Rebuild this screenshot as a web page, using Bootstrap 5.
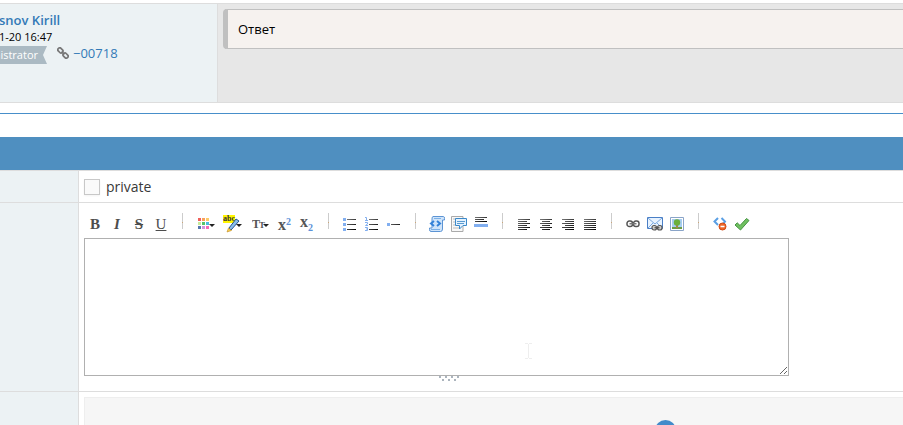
<!DOCTYPE html>
<html lang="en">
<head>
<meta charset="utf-8">
<meta name="viewport" content="width=device-width, initial-scale=1">
<title>Add note</title>
<link href="https://cdn.jsdelivr.net/npm/bootstrap@5.3.0/dist/css/bootstrap.min.css" rel="stylesheet">
<style>
body{font-family:"Open Sans",sans-serif;font-size:13px;line-height:18px;color:#393939;background:#fff;overflow:hidden}
a{color:#337ab7;text-decoration:none}
.line-t{border-top:1px solid #ddd}
.line-b{border-bottom:1px solid #ddd}
.side{background:#ecf2f4;border-right:1px solid #ddd;flex:none}
.note{margin-top:3px;height:100px}
.note-side{width:218px;padding-top:8px;line-height:16px}
.author,.stamp{margin-left:-1px}
.author{font-weight:600}
.stamp{font-size:11px;line-height:18px;color:#000}
.note-body{background:#e7e7e7;padding:5px 0 0 5px}
.bubble{background:#f6f2ef;border:1px solid #c0c0c0;border-left-width:5px;border-right:0;border-radius:4px 0 0 4px;padding:10px;height:40px;color:#000}
.role{background:#abbac3;color:#fff;font-size:11px;line-height:18px;height:18px;width:47px;padding-right:9px;display:flex;justify-content:flex-end;clip-path:polygon(0 0,100% 0,43px 50%,100% 100%,0 100%)}
.note-link{line-height:14px;margin-left:10px;gap:4px}
.rule{margin-top:10px;border-top:1px solid #478fca;height:24px}
.bar{background:#4f8fc0;height:33px}
.label-col{width:79px}
.cell{padding:5px 0 0 5px}
.private-row{height:33px}
.editor-row{height:189px}
.form-check-input.tick{width:16px;height:16px;margin:0;border:1px solid #c8c8c8;border-radius:0;background-color:#fafafa;box-shadow:0 1px 2px rgba(0,0,0,.05)}
.private-text{font-size:14px;padding-left:6px}
.editor{width:730px;max-width:100%}
.tool{width:22px;height:22px;padding:0;border:0;background:none;color:#4d4d4d;font:bold 15px/22px "Liberation Serif",serif;text-align:center;flex:none;display:flex;align-items:center;justify-content:center}
.tool.wide{width:27px}
.tool svg{display:block}
.gap-line{width:21px;height:16px;flex:none;padding:0 10px}
.gap-line span{display:block;height:16px;background:linear-gradient(#ccc 9px,#cba578 9px,#cba578 10px,#ccc 10px)}
.tools{padding-top:5px;height:30px}
textarea.box{display:block;width:705px;max-width:100%;height:138px;border:1px solid #b0b0b0;border-radius:0;padding:4px;resize:both;outline:0}
.drop{height:28px;overflow:hidden;background:#f6f6f6;border:1px solid #eee;border-width:1px 0 0 1px;padding:22px 0 0 570px}
.dot{width:21px;height:21px;border-radius:50%;background:#428bca}
.caret{position:absolute;left:524px;top:343px;pointer-events:none}
</style>
<script src="https://cdn.jsdelivr.net/npm/bootstrap@5.3.0/dist/js/bootstrap.bundle.min.js"></script>
</head>
<body>
<svg width="0" height="0" class="position-absolute" aria-hidden="true"><defs>
<linearGradient id="ink" x2="1" y2="1"><stop offset="0" stop-color="#777"/><stop offset="1" stop-color="#000"/></linearGradient>
</defs></svg>
<article class="note d-flex line-t line-b">
  <div class="side note-side">
    <div class="author"><a href="#user">snov Kirill</a></div>
    <div class="stamp">1-20 16:47</div>
    <div class="d-flex align-items-start">
      <span class="role">nistrator</span>
      <a href="#note" class="note-link d-flex align-items-center"><svg width="12" height="12" viewBox="0 0 12 12" fill="none" stroke="#777" stroke-width="1.7"><rect x="-2.7" y="-1.9" width="5.4" height="3.8" rx="1.6" transform="translate(3.4 3.4) rotate(45)"/><rect x="-2.7" y="-1.9" width="5.4" height="3.8" rx="1.6" transform="translate(8.6 8.6) rotate(45)"/><path d="M4.6 4.6 7.4 7.4"/></svg><span>−00718</span></a>
    </div>
  </div>
  <div class="note-body flex-grow-1"><div class="bubble">Ответ</div></div>
</article>
<div class="rule"></div>
<div class="bar"></div>
<form>
<div class="private-row d-flex line-t line-b">
  <div class="side label-col"></div>
  <div class="cell flex-grow-1 d-flex align-items-center pt-0">
    <input class="form-check-input tick" type="checkbox" id="private"><label class="private-text" for="private">private</label>
  </div>
</div>
<div class="editor-row d-flex line-b">
  <div class="side label-col"></div>
  <div class="cell flex-grow-1">
    <div class="editor">
      <div class="tools d-flex">
        <button type="button" class="tool">B</button>
        <button type="button" class="tool fst-italic">I</button>
        <button type="button" class="tool text-decoration-line-through">S</button>
        <button type="button" class="tool text-decoration-underline fw-normal">U</button>
        <div class="gap-line"><span></span></div>
        <button type="button" class="tool wide" aria-label="Colour"><svg width="18" height="12"><path fill="#f0605a" d="M0 0h3v3H0z"/><path fill="#f9a05a" d="M4 0h3v3H4z"/><path fill="#fccb68" d="M8 0h3v3H8z"/><path fill="#c5eb9c" d="M0 4h3v3H0z"/><path fill="#55c56a" d="M4 4h3v3H4z"/><path fill="#48bce0" d="M8 4h3v3H8z"/><path fill="#5578ad" d="M0 8h3v3H0z"/><path fill="#d394dd" d="M4 8h3v3H4z"/><path fill="#f768b4" d="M8 8h3v3H8z"/><path d="M11 6h6l-3 3z" fill="#222"/></svg></button>
        <button type="button" class="tool wide" aria-label="Highlight"><svg width="22" height="18"><path fill="#fff500" d="M0 0h12v8H0z"/><text x="0" y="6" font-family="Liberation Serif,serif" font-size="8" font-weight="bold" fill="#333">abc</text><path d="m6 13 7-9 3 2-8 9z" fill="#8abdeb" stroke="#24558e"/><path d="m4 17 1.5-4 3 2.5z" fill="#fbd04b" stroke="#c08a20" stroke-width=".6"/><path d="M13 9h6l-3 3z" fill="#222"/></svg></button>
        <button type="button" class="tool wide" aria-label="Size"><svg width="18" height="14" font-family="Liberation Serif,serif" font-weight="bold" fill="#555"><text x="0" y="11" font-size="12">T</text><text x="7" y="11" font-size="9">T</text><path d="M11 7h6l-3 3z" fill="#222"/></svg></button>
        <button type="button" class="tool" aria-label="Superscript"><svg width="18" height="22" font-family="Liberation Serif,serif" font-weight="bold"><text x="2" y="17" font-size="16" fill="#555">x</text><text x="10" y="12" font-size="10" fill="#5b92d8">2</text></svg></button>
        <button type="button" class="tool" aria-label="Subscript"><svg width="18" height="22" font-family="Liberation Serif,serif" font-weight="bold"><text x="2" y="14" font-size="16" fill="#555">x</text><text x="10" y="18" font-size="10" fill="#5b92d8">2</text></svg></button>
        <div class="gap-line"><span></span></div>
        <button type="button" class="tool" aria-label="Bullet list"><svg width="16" height="14"><path d="M1 1h3v3H1zM1 6h3v3H1zM1 11h3v3H1z" fill="#82aff0"/><path d="M5 2h9v1H5zM5 7h9v1H5zM5 12h9v1H5z" fill="url(#ink)"/></svg></button>
        <button type="button" class="tool" aria-label="Numbered list"><svg width="16" height="14" fill="none"><path d="M1 .5h1.5v3M1 3.5h3M1 5.5h2.5v1.5L1.5 8.5H4M1 10.5h2.5v3H1M2 12h1.5" stroke="#82aff0"/><path d="M5 2h9v1H5zM5 7h9v1H5zM5 12h9v1H5z" fill="url(#ink)"/></svg></button>
        <button type="button" class="tool" aria-label="List item"><svg width="16" height="14"><path d="M1 6h3v3H1z" fill="#82aff0"/><path d="M5 7h9v1H5z" fill="url(#ink)"/></svg></button>
        <div class="gap-line"><span></span></div>
        <button type="button" class="tool" aria-label="Code block"><svg width="16" height="16" fill="none"><path d="M4 .5h10.5q1 0 1 2v1.5h-2v9q0 2.500-2 2.500H2q-1.500 0-1.500-2V12H3V3Q3 .5 4 .5z" fill="#cfe4fa" stroke="#5c94d4"/><path d="M2 13.500h9M5 2.500h7" stroke="#7db1e6"/><path d="M5 5 2 7.500 5 10M8 5l3 2.500L8 10" stroke="#3482d8" stroke-width="2"/></svg></button>
        <button type="button" class="tool" aria-label="Quote"><svg width="16" height="16" fill="none"><path d="M.5.5H12V15.500H.5z" fill="#f8f8f8" stroke="#aaa"/><path d="M2 3h3M2 6h2M2 9h2M2 12h7" stroke="#bbb"/><path d="M4.500 2.500h11v7H12L8.500 13V9.500h-4z" fill="#e4f2ff" stroke="#3b89c9"/><path d="M6 5.500h8M6 7.500h7" stroke="#5a9bd0"/></svg></button>
        <button type="button" class="tool" aria-label="Line"><svg width="14" height="14"><path d="M1 0h12v1H1zM1 2h9v1H1zM1 4h12v1H1z" fill="url(#ink)"/><path d="M0 7h14v3H0z" fill="#82aff0"/></svg></button>
        <div class="gap-line"><span></span></div>
        <button type="button" class="tool" aria-label="Left"><svg width="12" height="12" fill="url(#ink)"><path d="M0 1h12v1H0zM0 3h9v1H0zM0 5h12v1H0zM0 7h9v1H0zM0 9h12v1H0zM0 11h9v1H0z"/></svg></button>
        <button type="button" class="tool" aria-label="Center"><svg width="12" height="12" fill="url(#ink)"><path d="M0 1h12v1H0zM2 3h8v1H2zM0 5h12v1H0zM2 7h8v1H2zM0 9h12v1H0zM2 11h8v1H2z"/></svg></button>
        <button type="button" class="tool" aria-label="Right"><svg width="12" height="12" fill="url(#ink)"><path d="M0 1h12v1H0zM3 3h9v1H3zM0 5h12v1H0zM3 7h9v1H3zM0 9h12v1H0zM3 11h9v1H3z"/></svg></button>
        <button type="button" class="tool" aria-label="Justify"><svg width="12" height="12" fill="url(#ink)"><path d="M0 1h12v1H0zM0 3h12v1H0zM0 5h12v1H0zM0 7h12v1H0zM0 9h12v1H0zM0 11h12v1H0z"/></svg></button>
        <div class="gap-line"><span></span></div>
        <button type="button" class="tool" aria-label="Link"><svg width="14" height="8" fill="none"><g stroke="#555" stroke-width="1.5"><rect x="1" y="1" width="5.5" height="5.5" rx="2.3"/><rect x="7.5" y="1" width="5.5" height="5.5" rx="2.3"/></g><path d="M3.5 3.700h7" stroke="#777" stroke-width="1.5"/></svg></button>
        <button type="button" class="tool" aria-label="Email"><svg width="16" height="14" fill="none"><path d="M.5.5h15v11H.5z" fill="#e8f3ff" stroke="#4a7fc6"/><path d="m1 1 7 6 7-6M1 11l5-5M15 11l-5-5" stroke="#7aa8de"/><g fill="#ccc" stroke="#555" stroke-width="1.2"><rect x="5" y="8.500" width="4.500" height="4.500" rx="2"/><rect x="10.500" y="8.500" width="4.500" height="4.500" rx="2"/><path d="M7.500 10.700h5"/></g></svg></button>
        <button type="button" class="tool" aria-label="Image"><svg width="14" height="14"><path d="M.5.5h13v13H.5z" fill="#fff" stroke="#8aa4c8"/><path d="M2 2h10v8H2z" fill="#a6cdf0"/><path d="M2 10h10v2H2z" fill="#6c9d45"/><path d="M6 7h2v4H6z" fill="#a8824a"/><circle cx="7" cy="5.500" r="3.200" fill="#6bb03c"/></svg></button>
        <div class="gap-line"><span></span></div>
        <button type="button" class="tool" aria-label="Remove formatting"><svg width="14" height="14" fill="none"><path d="M5 1 1.500 4.500 5 8M8.500 1 12 4.500 10 7" stroke="#5a9fe4" stroke-width="2"/><circle cx="9.500" cy="9.500" r="3.500" fill="#f0692a" stroke="#cf4a16"/><path d="M7.500 9.500h4" stroke="#fff" stroke-width="1.500"/></svg></button>
        <button type="button" class="tool" aria-label="Preview"><svg width="16" height="14"><path d="m1 8 2.200-2.200L6 8.500 12.500 1.500 15 3.500 6.500 13z" fill="#70c060" stroke="#469443"/></svg></button>
      </div>
      <textarea class="box" aria-label="Note"></textarea>
      <svg class="d-block mx-auto" width="20" height="5" fill="#abb4bd"><path d="M0 0h2v2H0zM6 0h2v2H6zM12 0h2v2h-2zM18 0h2v2h-2zM3 3h2v2H3zM9 3h2v2H9zM15 3h2v2h-2z"/></svg>
    </div>
  </div>
</div>
<div class="d-flex">
  <div class="side label-col"></div>
  <div class="cell flex-grow-1"><div class="drop"><div class="dot"></div></div></div>
</div>
</form>
<svg class="caret" width="9" height="16" fill="none" stroke="#eee"><path d="M1 .5h3M5 .5h3M4.500 1v14M1 15.500h3M5 15.500h3"/></svg>
</body>
</html>
